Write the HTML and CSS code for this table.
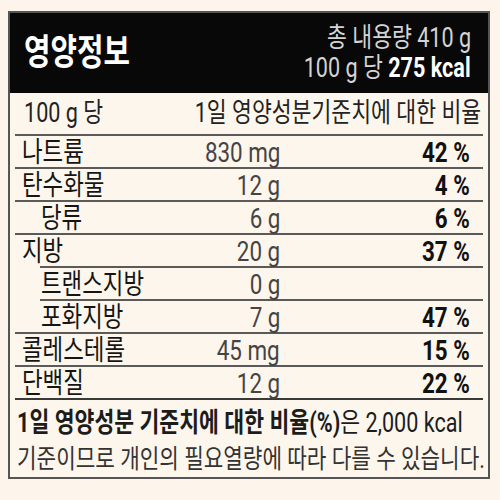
FILE: index.html
```html
<!DOCTYPE html>
<html lang="ko">
<head>
    <meta charset="UTF-8">
    <meta name="viewport" content="width=device-width, initial-scale=1.0">
    <title>영양정보</title>
    <link rel="stylesheet" href="styles.css">
</head>
<body>

<div class="label">
    <div class="head">
        <div class="title"><span class="t">영양정보</span></div>
        <div class="total">
            <div><span class="t r">총 내용량 410 g</span></div>
            <div><span class="t r">100 g 당 <b>275 kcal</b></span></div>
        </div>
    </div>

    <div class="rows">
        <div class="top">
            <span class="t">100 g 당</span>
            <span class="t r">1일 영양성분기준치에 대한 비율</span>
        </div>
        <div class="row">
            <div class="name"><span class="t">나트륨</span></div>
            <div class="amt"><span class="t r">830 mg</span></div>
            <div class="pct"><span class="t r">42 %</span></div>
        </div>
        <div class="row">
            <div class="name"><span class="t">탄수화물</span></div>
            <div class="amt"><span class="t r">12 g</span></div>
            <div class="pct"><span class="t r">4 %</span></div>
        </div>
        <div class="row">
            <div class="name sub"><span class="t">당류</span></div>
            <div class="amt"><span class="t r">6 g</span></div>
            <div class="pct"><span class="t r">6 %</span></div>
        </div>
        <div class="row cut">
            <div class="name"><span class="t">지방</span></div>
            <div class="amt"><span class="t r">20 g</span></div>
            <div class="pct"><span class="t r">37 %</span></div>
        </div>
        <div class="row cut">
            <div class="name sub"><span class="t">트랜스지방</span></div>
            <div class="amt"><span class="t r">0 g</span></div>
            <div class="pct"></div>
        </div>
        <div class="row">
            <div class="name sub"><span class="t">포화지방</span></div>
            <div class="amt"><span class="t r">7 g</span></div>
            <div class="pct"><span class="t r">47 %</span></div>
        </div>
        <div class="row">
            <div class="name"><span class="t">콜레스테롤</span></div>
            <div class="amt"><span class="t r">45 mg</span></div>
            <div class="pct"><span class="t r">15 %</span></div>
        </div>
        <div class="row last">
            <div class="name"><span class="t">단백질</span></div>
            <div class="amt"><span class="t r">12 g</span></div>
            <div class="pct"><span class="t r">22 %</span></div>
        </div>
    </div>

    <div class="foot">
        <div><span class="t"><b>1일 영양성분 기준치에 대한 비율(%)</b>은 2,000 kcal</span></div>
        <div><span class="t light">기준이므로 개인의 필요열량에 따라 다를 수 있습니다.</span></div>
    </div>
</div>

</body>
</html>
```

FILE: styles.css
```css
body{
    margin: 0;
    padding: 11px 10px 0 8px;
    background-color: #fdf5ec;
    font-family: "Roboto", "Noto Sans CJK KR", sans-serif;
    color: #1c1c1c;
}
.label{
    border: 2px solid #555;
    background-color: #fdf6ec;
}

/* condensed look of the print font */
.t{
    display: inline-block;
    white-space: nowrap;
    transform: scaleX(.8);
    transform-origin: left center;
    line-height: 1;
}
.t.r{
    transform-origin: right center;
}
b{
    font-weight: 700;
}

.head{
    display: flex;
    justify-content: space-between;
    align-items: center;
    height: 80px;
    padding: 0 17px 0 14px;
    background-color: #080808;
    color: #fff;
}
.title{
    font-size: 36px;
    font-weight: 700;
}
.total{
    display: flex;
    flex-direction: column;
    align-items: flex-end;
    font-size: 27px;
    color: #d4d4d4;
}
.total div{
    height: 30px;
    display: flex;
    align-items: center;
}
.total b{
    color: #fff;
}

.rows{
    margin: 0 5px;
    font-size: 28px;
}
.top{
    display: flex;
    justify-content: space-between;
    align-items: center;
    height: 41px;
    padding: 0 11px 0 9px;
    border-bottom: 2px solid #5a5a5a;
    font-size: 27px;
    color: #222;
}
.row{
    display: grid;
    grid-template-columns: 150px 115px 1fr;
    align-items: center;
    height: 31px;
    padding-right: 13px;
    border-bottom: 2px solid #5a5a5a;
}
.row.cut{
    border-bottom: none;
    padding-bottom: 2px;
    background: linear-gradient(#5a5a5a, #5a5a5a) 25px 100% / calc(100% - 25px) 2px no-repeat;
}
.row.last{
    border-bottom-color: #3a3a3a;
}
.name{
    padding-left: 7px;
    color: #151515;
}
.name.sub{
    padding-left: 26px;
}
.amt{
    text-align: right;
    color: #444;
}
.pct{
    text-align: right;
    font-weight: 700;
    color: #111;
}

.foot{
    padding: 5px 2px 0 7px;
    height: 72px;
    font-size: 27px;
}
.foot div{
    height: 36px;
    display: flex;
    align-items: center;
}
.foot .light{
    font-size: 26.6px;
    color: #333;
}
```
